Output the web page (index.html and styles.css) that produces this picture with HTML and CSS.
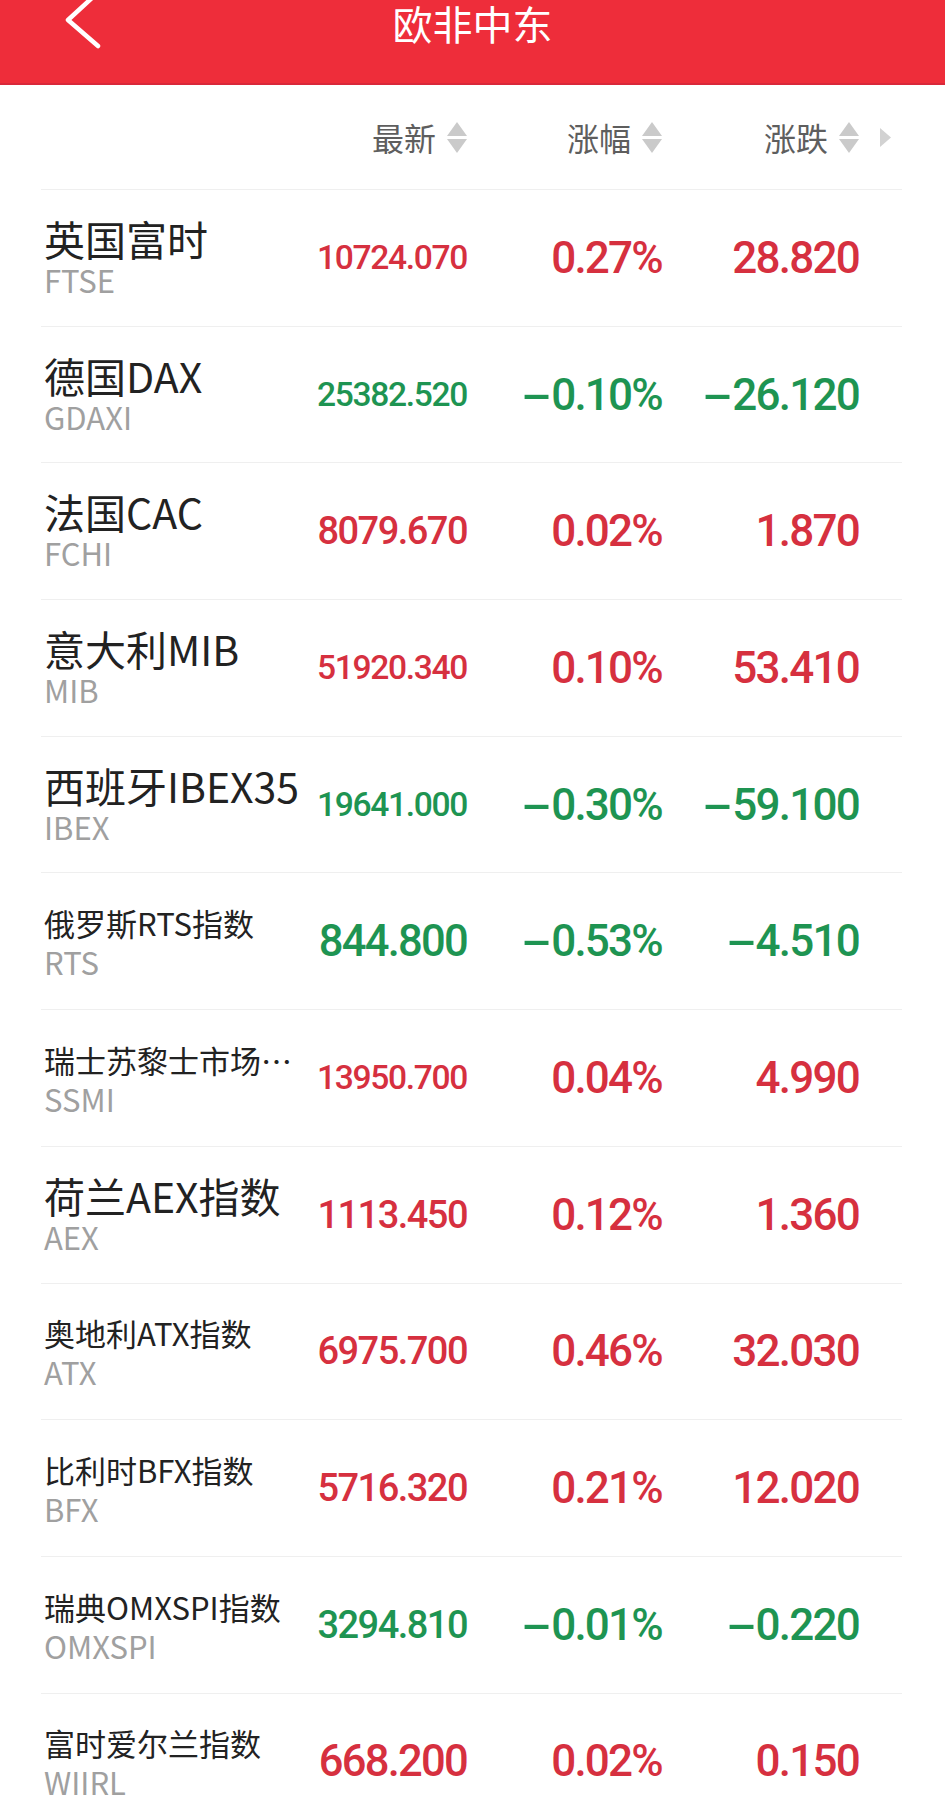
FILE: index.html
```html
<!DOCTYPE html>
<html lang="zh-CN">
<head>
<meta charset="utf-8">
<title>欧非中东</title>
<link rel="stylesheet" href="styles.css">
</head>
<body>
<div class="page">
  <header class="topbar">
    <div class="back">
      <svg width="44" height="50" viewBox="0 0 44 50"><polyline points="33,-3 8,20 38,46" fill="none" stroke="#fff" stroke-width="4.5" stroke-linecap="round" stroke-linejoin="round"/></svg>
    </div>
    <h1 class="title">欧非中东</h1>
    <div></div>
  </header>

  <div class="list">
    <div class="head">
      <div></div>
      <div class="hcell"><span>最新</span><svg class="sort" width="20" height="31" viewBox="0 0 20 31"><polygon points="10,0 20,14 0,14"/><polygon points="0,17 20,17 10,31"/></svg></div>
      <div class="hcell"><span>涨幅</span><svg class="sort" width="20" height="31" viewBox="0 0 20 31"><polygon points="10,0 20,14 0,14"/><polygon points="0,17 20,17 10,31"/></svg></div>
      <div class="hcell"><span>涨跌</span><svg class="sort" width="20" height="31" viewBox="0 0 20 31"><polygon points="10,0 20,14 0,14"/><polygon points="0,17 20,17 10,31"/></svg></div>
      <div class="more"><svg width="11" height="19" viewBox="0 0 11 19"><polygon points="0,0 11,9.5 0,19"/></svg></div>
    </div>

    <div class="row up">
      <div class="nm big"><div class="name">英国富时</div><div class="code">FTSE</div></div>
      <div class="num n9">10724.070</div><div class="num">0.27%</div><div class="num">28.820</div>
    </div>
    <div class="row down">
      <div class="nm big"><div class="name">德国DAX</div><div class="code">GDAXI</div></div>
      <div class="num n9">25382.520</div><div class="num"><span class="m">-</span>0.10%</div><div class="num"><span class="m">-</span>26.120</div>
    </div>
    <div class="row up">
      <div class="nm big"><div class="name">法国CAC</div><div class="code">FCHI</div></div>
      <div class="num n8">8079.670</div><div class="num">0.02%</div><div class="num">1.870</div>
    </div>
    <div class="row up">
      <div class="nm big"><div class="name">意大利MIB</div><div class="code">MIB</div></div>
      <div class="num n9">51920.340</div><div class="num">0.10%</div><div class="num">53.410</div>
    </div>
    <div class="row down">
      <div class="nm big"><div class="name">西班牙IBEX35</div><div class="code">IBEX</div></div>
      <div class="num n9">19641.000</div><div class="num"><span class="m">-</span>0.30%</div><div class="num"><span class="m">-</span>59.100</div>
    </div>
    <div class="row down">
      <div class="nm small"><div class="name">俄罗斯RTS指数</div><div class="code">RTS</div></div>
      <div class="num n7">844.800</div><div class="num"><span class="m">-</span>0.53%</div><div class="num"><span class="m">-</span>4.510</div>
    </div>
    <div class="row up">
      <div class="nm small"><div class="name clip">瑞士苏黎士市场指数</div><div class="code">SSMI</div></div>
      <div class="num n9">13950.700</div><div class="num">0.04%</div><div class="num">4.990</div>
    </div>
    <div class="row up">
      <div class="nm big"><div class="name">荷兰AEX指数</div><div class="code">AEX</div></div>
      <div class="num n8">1113.450</div><div class="num">0.12%</div><div class="num">1.360</div>
    </div>
    <div class="row up">
      <div class="nm small"><div class="name">奥地利ATX指数</div><div class="code">ATX</div></div>
      <div class="num n8">6975.700</div><div class="num">0.46%</div><div class="num">32.030</div>
    </div>
    <div class="row up">
      <div class="nm small"><div class="name">比利时BFX指数</div><div class="code">BFX</div></div>
      <div class="num n8">5716.320</div><div class="num">0.21%</div><div class="num">12.020</div>
    </div>
    <div class="row down">
      <div class="nm small"><div class="name">瑞典OMXSPI指数</div><div class="code">OMXSPI</div></div>
      <div class="num n8">3294.810</div><div class="num"><span class="m">-</span>0.01%</div><div class="num"><span class="m">-</span>0.220</div>
    </div>
    <div class="row up">
      <div class="nm small"><div class="name">富时爱尔兰指数</div><div class="code">WIIRL</div></div>
      <div class="num n7">668.200</div><div class="num">0.02%</div><div class="num">0.150</div>
    </div>
  </div>
</div>
</body>
</html>
```

FILE: styles.css
```css
html, body {
  margin: 0;
  padding: 0;
  background: #ffffff;
}

.page {
  width: 945px;
  height: 1802px;
  overflow: hidden;
  font-family: "Noto Sans CJK SC", "Noto Sans", sans-serif;
  color: #222222;
}

.topbar {
  height: 85px;
  box-sizing: border-box;
  background: #ee2d3a;
  border-bottom: 2px solid #d9283a;
  display: grid;
  grid-template-columns: 1fr auto 1fr;
  align-items: start;
  overflow: hidden;
}

.back {
  padding-left: 60px;
  height: 50px;
}

.back svg {
  display: block;
}

.title {
  margin: 0;
  font-size: 40px;
  line-height: 52px;
  margin-top: -3px;
  font-weight: 400;
  color: #ffffff;
}

.list {
  margin: 0 43px 0 41px;
}

.head {
  display: grid;
  grid-template-columns: 263px 160px 195px 197px 43px;
  padding-left: 3px;
  height: 105px;
  box-sizing: border-box;
  border-bottom: 1px solid #efefef;
  align-items: center;
}

.hcell {
  display: flex;
  justify-content: flex-end;
  align-items: center;
  gap: 11px;
  font-size: 32px;
  line-height: 46px;
  color: #5e5e5e;
}

.sort {
  display: block;
  fill: #cacaca;
}

.more {
  padding-left: 21px;
  display: flex;
  align-items: center;
}

.more svg {
  display: block;
  fill: #d2d2d2;
}

.row {
  display: grid;
  grid-template-columns: 263px 160px 195px 197px;
  padding: 0 43px 0 3px;
  height: 136.7px;
  box-sizing: border-box;
  border-bottom: 1px solid #efefef;
  align-items: center;
}

.nm {
  display: flex;
  flex-direction: column;
  min-width: 0;
}

.name {
  white-space: nowrap;
  color: #222222;
}

.name.clip {
  overflow: hidden;
  text-overflow: ellipsis;
}

.big .name {
  font-size: 41px;
  line-height: 48px;
}

.big .code {
  padding-bottom: 4px;
}

.small .name {
  font-size: 31px;
  line-height: 42px;
}

.code {
  font-size: 31px;
  line-height: 36px;
  color: #a0a0a0;
  white-space: nowrap;
}

.num {
  font-family: Roboto, "Liberation Sans", sans-serif;
  font-weight: 500;
  font-size: 44px;
  letter-spacing: -0.04em;
  text-align: right;
  white-space: nowrap;
}

.num.n7 { font-size: 43.5px; }
.num.n8 { font-size: 38px; }
.num.n9 { font-size: 33.6px; }

.up .num { color: #d6303f; }
.down .num { color: #1e9452; }

.m {
  display: inline-block;
  width: 0.68em;
  text-align: left;
  transform: scaleX(2.1);
  transform-origin: left center;
}
```
